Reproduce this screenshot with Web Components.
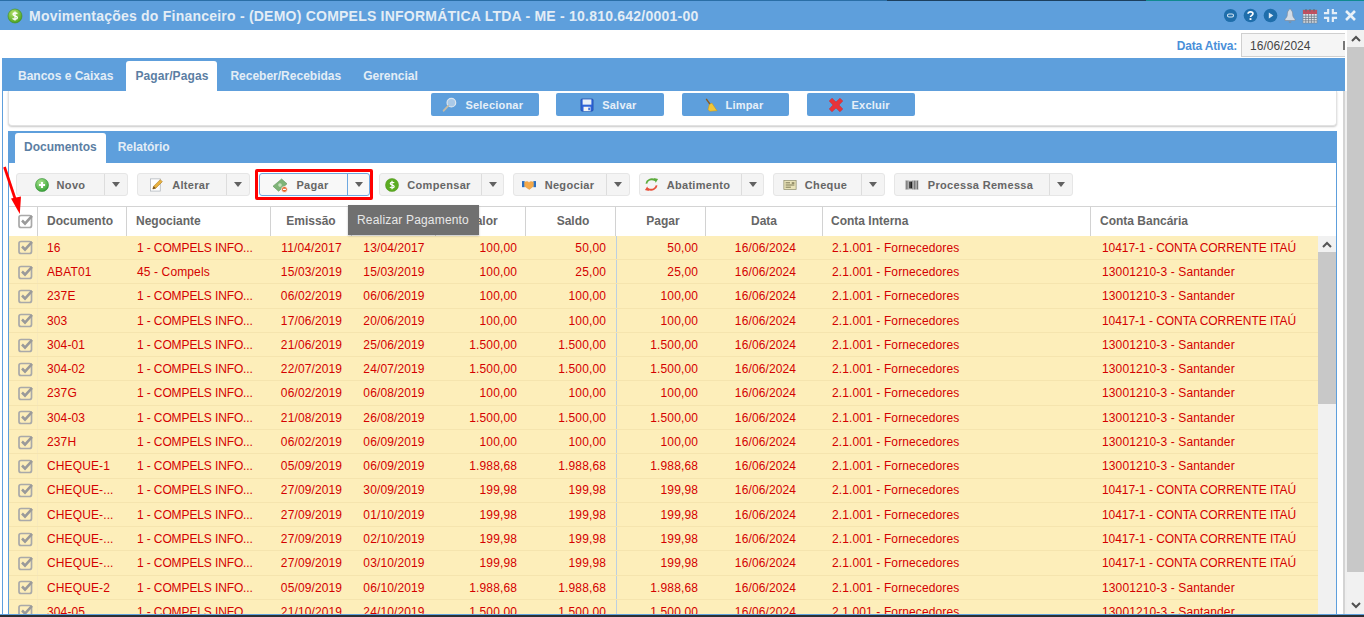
<!DOCTYPE html>
<html lang="pt-BR">
<head>
<meta charset="utf-8">
<title>Movimentações do Financeiro</title>
<style>
html,body{margin:0;padding:0;background:#fff;overflow:hidden;font-family:"Liberation Sans",Arial,sans-serif;font-size:12px}
</style>
</head>
<body>
<x-app>
  <x-titlebar slot="title" text="Movimentações do Financeiro - (DEMO) COMPELS INFORMÁTICA LTDA - ME - 10.810.642/0001-00"></x-titlebar>
  <x-date-row slot="date" label="Data Ativa:" value="16/06/2024"></x-date-row>
  <x-main-tabs slot="tabs">
    <x-tab>Bancos e Caixas</x-tab>
    <x-tab active>Pagar/Pagas</x-tab>
    <x-tab>Receber/Recebidas</x-tab>
    <x-tab>Gerencial</x-tab>
  </x-main-tabs>
  <x-action-card slot="card">
    <x-action-btn icon="search" w="108">Selecionar</x-action-btn>
    <x-action-btn icon="save" w="108">Salvar</x-action-btn>
    <x-action-btn icon="broom" w="107">Limpar</x-action-btn>
    <x-action-btn icon="redx" w="108">Excluir</x-action-btn>
  </x-action-card>
  <x-doc-panel slot="panel">
    <x-tab slot="tabs" active small>Documentos</x-tab>
    <x-tab slot="tabs" small>Relatório</x-tab>
    <x-split-btn slot="tools" icon="plus" w="112" cw="22" pr="1">Novo</x-split-btn>
    <x-split-btn slot="tools" icon="pencil" w="113" cw="22" pr="5">Alterar</x-split-btn>
    <x-split-btn slot="tools" icon="money" w="111" cw="21" pr="6" focus>Pagar</x-split-btn>
    <x-split-btn slot="tools" icon="coin" w="125" cw="21" pr="5">Compensar</x-split-btn>
    <x-split-btn slot="tools" icon="hands" w="117" cw="22" pr="5">Negociar</x-split-btn>
    <x-split-btn slot="tools" icon="sync" w="125" cw="21" pr="7">Abatimento</x-split-btn>
    <x-split-btn slot="tools" icon="cheque" w="112" cw="22" pr="5">Cheque</x-split-btn>
    <x-split-btn slot="tools" icon="barcode" w="179" cw="22" pr="7">Processa Remessa</x-split-btn>
    <x-data-grid slot="grid"></x-data-grid>
  </x-doc-panel>
  <x-scrollbar slot="scroll"></x-scrollbar>
  <x-annotations slot="over"></x-annotations>
  <x-tooltip slot="over">Realizar Pagamento</x-tooltip>
</x-app>

<script>
const ICONS = {
  dollar:`<svg viewBox="0 0 16 16" width="16" height="16"><defs><radialGradient id="g1" cx=".4" cy=".3" r=".8"><stop offset="0" stop-color="#b6e26a"/><stop offset="1" stop-color="#3d9a16"/></radialGradient></defs><circle cx="8" cy="8" r="7" fill="url(#g1)" stroke="#3f8f1c" stroke-width=".6"/><path d="M10.4 5.6C9.8 4.7 6 4.3 6 6.2c0 2 4.4 1.4 4.4 3.6 0 2-4 1.6-4.8.5M8 3.4v9.2" fill="none" stroke="#fff" stroke-width="1.3"/></svg>`,
  minus:`<svg viewBox="0 0 16 16" width="15" height="15"><circle cx="8" cy="8" r="7" fill="#1f6eab"/><rect x="4.8" y="6.4" width="6.4" height="3.2" rx="1.6" fill="none" stroke="#d9e8f4" stroke-width="1.1"/></svg>`,
  help:`<svg viewBox="0 0 16 16" width="15" height="15"><circle cx="8" cy="8" r="7.3" fill="#1f6eab"/><path d="M5.4 6.1C5.6 3.6 10.6 3.6 10.6 6.1 10.6 7.9 8 7.8 8 9.7" fill="none" stroke="#fff" stroke-width="1.8"/><rect x="7" y="10.8" width="2" height="2" fill="#fff"/></svg>`,
  play:`<svg viewBox="0 0 16 16" width="15" height="15"><circle cx="8" cy="8" r="7.3" fill="#1f6eab"/><path d="M6.2 4.8 11 8l-4.800 3.200z" fill="#dce9f4"/></svg>`,
  bell:`<svg viewBox="0 0 16 16" width="16" height="16"><path d="M8 1c1 0 1.200.8 1.300 1.400 1.200.7 1.300 2.400 1.400 4.300.1 2 1.300 3.500 2.300 4.400v1.400H3v-1.400c1-.9 2.200-2.400 2.300-4.400.1-1.900.2-3.600 1.400-4.300C6.800 1.800 7 1 8 1z" fill="#d3dce6" stroke="#7f8d9c" stroke-width=".7"/><path d="M6.200 13.400h3.600L8 15.300z" fill="#7f8d9c"/></svg>`,
  calendar:`<svg viewBox="0 0 16 16" width="16" height="16"><rect x="1" y="2" width="14" height="13" fill="#dfe4ea" stroke="#7b8794" stroke-width=".6"/><rect x="1" y="2" width="14" height="4" fill="#c0505f"/><path d="M4 1v2.500M8 1v2.500M12 1v2.500" stroke="#5d6670" stroke-width="1"/><path d="M1 8.200h14M1 10.500h14M1 12.800h14M3.800 6v9M6.600 6v9M9.400 6v9M12.200 6v9" stroke="#6f7c8a" stroke-width=".8"/></svg>`,
  compress:`<svg viewBox="0 0 16 16" width="15" height="15"><path d="M5.500 1v4.500H1M10.500 1v4.500H15M5.500 15v-4.500H1M10.500 15v-4.500H15" fill="none" stroke="#e4eef7" stroke-width="2.300"/></svg>`,
  close:`<svg viewBox="0 0 16 16" width="13" height="13"><path d="M2.500 2.500l11 11M13.500 2.500l-11 11" stroke="#e9f1f8" stroke-width="3.200"/></svg>`,
  search:`<svg viewBox="0 0 16 16" width="15" height="15"><circle cx="10" cy="6" r="4.600" fill="#a9c9e8" stroke="#dbe5ee" stroke-width="1.300"/><path d="M6.600 9.400 1.800 14.600" stroke="#c4bca8" stroke-width="2" stroke-linecap="round"/></svg>`,
  save:`<svg viewBox="0 0 16 16" width="14" height="14"><rect x="1" y="1" width="14" height="14" rx="1.500" fill="#2d63d8" stroke="#1b3f98" stroke-width=".6"/><rect x="3" y="1.600" width="10" height="6" fill="#e6eef8"/><rect x="4" y="10" width="8" height="5" fill="#f4f4f4"/><rect x="9.500" y="11" width="1.800" height="3" fill="#2d63d8"/></svg>`,
  broom:`<svg viewBox="0 0 16 16" width="14" height="14"><path d="M2.500 1 7.500 8" stroke="#8a5a22" stroke-width="1.600"/><path d="M6 7.500 9 5.800 13.500 12.500 15 14.500 6.500 15.200 4.600 13z" fill="#f2c636" stroke="#c8981a" stroke-width=".6"/></svg>`,
  redx:`<svg viewBox="0 0 16 16" width="16" height="16"><path d="M1.200 4 4 1.200 8 5l4-3.800L14.800 4 11 8l3.800 4-2.800 2.800L8 11l-4 3.800L1.200 12 5 8z" fill="#e8333a" stroke="#c92a30" stroke-width=".5"/></svg>`,
  plus:`<svg viewBox="0 0 16 16" width="14" height="14"><defs><radialGradient id="g2" cx=".4" cy=".3" r=".8"><stop offset="0" stop-color="#a8e48c"/><stop offset="1" stop-color="#2b9a2e"/></radialGradient></defs><circle cx="8" cy="8" r="7.500" fill="url(#g2)" stroke="#2e8a30" stroke-width=".6"/><path d="M8 4.500v7M4.500 8h7" stroke="#fff" stroke-width="2.400"/></svg>`,
  pencil:`<svg viewBox="0 0 16 16" width="15" height="15"><rect x="1.500" y="2" width="10.500" height="13" fill="#fff" stroke="#aeb4ba" stroke-width=".8"/><path d="M4 12.800 5 9.800 12 2.800 14.200 5 7.200 12z" fill="#e9b23f" stroke="#a8761c" stroke-width=".6"/><path d="M4 12.800 5 9.800 7.200 12z" fill="#6b4b20"/></svg>`,
  money:`<svg viewBox="0 0 16 16" width="16" height="16"><path d="M1 9.200 9.600 2l5.400 4.800-8.400 7.400z" fill="#7fb478" stroke="#5f935a" stroke-width=".6"/><circle cx="8" cy="8.100" r="1.800" fill="#c6e0bc"/><circle cx="12.400" cy="12.400" r="2.900" fill="#e8662c" stroke="#fff" stroke-width=".7"/><rect x="10.900" y="11.800" width="3" height="1.200" fill="#fff"/></svg>`,
  coin:`<svg viewBox="0 0 16 16" width="14" height="14"><circle cx="8" cy="8" r="7.500" fill="#5cac22" stroke="#4a9118" stroke-width=".5"/><path d="M10.500 5.700C9.800 4.700 6 4.300 6 6.200c0 2 4.500 1.400 4.500 3.600 0 2-4.100 1.700-4.900.5M8 3.200v9.600" fill="none" stroke="#fff" stroke-width="1.400"/></svg>`,
  hands:`<svg viewBox="0 0 16 16" width="16" height="14"><rect x="0" y="3.500" width="3" height="7" fill="#2c6fc0"/><rect x="13" y="3.500" width="3" height="7" fill="#2c6fc0"/><path d="M3 4.500 6 4 8 5l2-1 3 .5v5L8.500 13 6.500 12 3 9.500z" fill="#f4a94a" stroke="#d98a2a" stroke-width=".4"/></svg>`,
  sync:`<svg viewBox="0 0 16 16" width="15" height="15"><path d="M2.500 7C3 3.600 7.500 .8 12 3.500" fill="none" stroke="#5cab3c" stroke-width="1.900"/><path d="M10.500 1 15 2.200 12.500 6z" fill="#5cab3c"/><path d="M13.500 9C13 12.400 8.500 15.200 4 12.500" fill="none" stroke="#e8503a" stroke-width="1.900"/><path d="M5.500 15 1 13.800 3.500 10z" fill="#e8503a"/></svg>`,
  cheque:`<svg viewBox="0 0 16 16" width="14" height="14"><rect x="1" y="3" width="14" height="10" fill="#e8e2b8" stroke="#8c8a68" stroke-width=".8"/><path d="M3 5.500h5M3 8h10M3 10.500h6" stroke="#6e6a48" stroke-width="1"/><rect x="10" y="5" width="3" height="1.500" fill="#6e6a48"/></svg>`,
  barcode:`<svg viewBox="0 0 16 16" width="16" height="14"><rect x="0" y="2.500" width="16" height="11" fill="#d8d8d8"/><path d="M1.500 3v10M3.300 3v10M9 3v10M10.800 3v10M12.500 3v10M14.300 3v10" stroke="#555" stroke-width=".9"/><path d="M5.600 4v8M7.300 4v8" stroke="#222" stroke-width="1.500"/></svg>`,
  check:`<svg viewBox="0 0 16 16" width="16" height="16"><rect x="1" y="2.500" width="12.500" height="12" rx="2" fill="none" stroke="#a9a9a9" stroke-width="1.700"/><path d="M4 7.500 7 10.500 14 2.800" fill="none" stroke="#9a9a9a" stroke-width="2.600"/></svg>`
};

function comp(name, css, html, init){
  customElements.define(name, class extends HTMLElement{
    constructor(){ super(); this.attachShadow({mode:'open'}); }
    connectedCallback(){
      if(this._done) return; this._done = true;
      const h = typeof html === 'function' ? html(this) : html;
      this.shadowRoot.innerHTML = `<style>${css}</style>${h}`;
      if(init) init(this);
    }
  });
}

comp('x-icon', `:host{display:inline-flex;align-items:center;justify-content:center;flex:none}svg{display:block}`, el => ICONS[el.getAttribute('name')] || '');

comp('x-app', `
  :host{display:flex;flex-direction:column;width:1364px;height:617px;overflow:hidden;position:relative;background:#fff}
  .body{flex:1;min-height:0;display:flex}
  .main{width:1347px;display:flex;flex-direction:column;min-height:0}
  .region{flex:1;min-height:0;display:flex;margin-left:2px;border-left:1px solid #5e9fdc;overflow:hidden}
  .col{width:1329px;margin-left:5px;display:flex;flex-direction:column;min-height:0}
  .thin{margin-left:6px;width:4px;display:flex}
  .thin i{display:block;width:2px;background:#d4d4d4}
  .thin b{display:block;width:2px;background:#efefef}
  .foot{height:1px;background:#5e9fdc;flex:none}
  .foot2{height:2px;background:#2c2f33;flex:none}
`,`
  <slot name="title"></slot>
  <div class="body">
    <div class="main">
      <slot name="date"></slot>
      <slot name="tabs"></slot>
      <div class="region">
        <div class="col"><slot name="card"></slot><slot name="panel"></slot></div>
        <div class="thin"><i></i><b></b></div>
      </div>
    </div>
    <slot name="scroll"></slot>
  </div>
  <div class="foot"></div><div class="foot2"></div>
  <slot name="over"></slot>
`);

comp('x-titlebar', `
  :host{display:flex;flex-direction:column;height:30px;flex:none;background:#5e9fdc}
  .strip{height:1px;background:linear-gradient(90deg,#2a6ea6 0,#2a6ea6 65%,#1c3f5e 65%,#1c3f5e 84%,#108a90 84%,#108a90 100%);flex:none}
  .row{flex:1;display:flex;align-items:center;padding:0 4px 0 7px}
  .t{margin-left:6px;font:bold 14px "Liberation Sans",Arial,sans-serif;color:#e3edf6;white-space:nowrap;flex:1;letter-spacing:.225px}
  .ic{display:flex}
  .ic x-icon{width:20px;height:20px}
`, el => `
  <div class="strip"></div>
  <div class="row">
    <x-icon name="dollar"></x-icon>
    <div class="t">${el.getAttribute('text')}</div>
    <div class="ic">
      <x-icon name="minus"></x-icon><x-icon name="help"></x-icon><x-icon name="play"></x-icon>
      <x-icon name="bell"></x-icon><x-icon name="calendar"></x-icon><x-icon name="compress"></x-icon><x-icon name="close"></x-icon>
    </div>
  </div>`);

comp('x-date-row', `
  :host{display:flex;height:28px;flex:none;align-items:flex-start;justify-content:flex-end;padding-right:2px;overflow:hidden}
  .l{font:bold 12px "Liberation Sans",Arial,sans-serif;color:#4a90d9;margin:9px 4px 0 0;letter-spacing:-.19px}
  .v{box-sizing:border-box;width:104px;height:24px;margin-top:3px;background:#f5f5f5;border:1px solid #cfcfcf;border-right:0;padding:0 0 0 8px;font:12px/24px "Liberation Sans",Arial,sans-serif;color:#444;letter-spacing:.05px;position:relative;display:flex;justify-content:space-between}
  .c{width:2px;height:9px;background:#777;margin-top:7px}
`, el => `<div class="l">${el.getAttribute('label')}</div><div class="v"><span>${el.getAttribute('value')}</span><span class="c"></span></div>`);

comp('x-main-tabs', `
  :host{display:flex;height:33px;flex:none;background:#5e9fdc;margin:0 2px;padding:3px 0 0 7px;box-sizing:border-box;gap:4px}
`, `<slot></slot>`);

comp('x-tab', `
  :host{display:block;box-sizing:border-box;padding:0 9px;height:30px;font:bold 12px/30px "Liberation Sans",Arial,sans-serif;color:#e3edf6;border-radius:3px 3px 0 0;white-space:nowrap}
  :host([active]){background:#fff;color:#5b7ea3;letter-spacing:.09px}
  :host([small]){line-height:28px;letter-spacing:0}
`, `<slot></slot>`);

comp('x-action-card', `
  :host{display:flex;justify-content:center;flex:none;box-sizing:border-box;height:35px;padding:2px 0 0 .4px;gap:17.600px;background:#fff;border:1px solid #e2e2e2;border-top:0;border-radius:0 0 4px 4px;box-shadow:0 1px 2px rgba(0,0,0,.22)}
`, `<slot></slot>`);

comp('x-action-btn', `
  :host{display:flex;align-items:center;justify-content:center;box-sizing:border-box;height:23px;padding-right:4px;background:#5e9fdc;border-radius:2px;color:#e8f0f8;font:bold 11px "Liberation Sans",Arial,sans-serif;gap:8px;letter-spacing:.2px}
`, el => { el.style.width = el.getAttribute('w')+'px'; return `<x-icon name="${el.getAttribute('icon')}"></x-icon><slot></slot>`; });

comp('x-doc-panel', `
  :host{display:flex;flex-direction:column;flex:1;min-height:0;margin-top:5px;border:1px solid #5e9fdc;border-bottom:0;background:#fff}
  .tabs{display:flex;height:31px;flex:none;background:#5e9fdc;padding:1px 0 0 6px;box-sizing:border-box;gap:3px}
  .tools{display:flex;height:44px;flex:none;padding:10px 0 0 7px;box-sizing:border-box;gap:9px;border-bottom:1px solid #d4d4d4}
  .grid{flex:1;min-height:0;display:flex}
`, `
  <div class="tabs"><slot name="tabs"></slot></div>
  <div class="tools"><slot name="tools"></slot></div>
  <div class="grid"><slot name="grid"></slot></div>`);

comp('x-split-btn', `
  :host{display:flex;box-sizing:border-box;height:23px;background:#f4f4f4;border:1px solid #e6e6e6;border-radius:3px;color:#666;font:bold 11px "Liberation Sans",Arial,sans-serif;letter-spacing:.32px}
  :host([focus]){background:#f8f8f8;border-color:#6ea8e0}
  .m{flex:1;display:flex;align-items:center;justify-content:center;gap:8px;min-width:0}
  .c{flex:none;border-left:1px solid #ddd;display:flex;align-items:center;justify-content:center}
  :host([focus]) .c{border-left-color:#6ea8e0}
  .c i{display:block;width:0;height:0;border:4.500px solid transparent;border-top:5px solid #616161;border-bottom:0}
`, el => { el.style.width = el.getAttribute('w')+'px';
  return `<div class="m" style="padding-right:${el.getAttribute('pr')}px"><x-icon name="${el.getAttribute('icon')}"></x-icon><slot></slot></div><div class="c" style="width:${el.getAttribute('cw')}px"><i></i></div>`; });

const RED = '1 - COMPELS INFO...';
const ITAU = '10417-1 - CONTA CORRENTE ITAÚ', SAN = '13001210-3 - Santander';
const ROWS = [
 ['16',RED,'11/04/2017','13/04/2017','100,00','50,00','50,00',ITAU],
 ['ABAT01','45 - Compels','15/03/2019','15/03/2019','100,00','25,00','25,00',SAN],
 ['237E',RED,'06/02/2019','06/06/2019','100,00','100,00','100,00',SAN],
 ['303',RED,'17/06/2019','20/06/2019','100,00','100,00','100,00',ITAU],
 ['304-01',RED,'21/06/2019','25/06/2019','1.500,00','1.500,00','1.500,00',SAN],
 ['304-02',RED,'22/07/2019','24/07/2019','1.500,00','1.500,00','1.500,00',SAN],
 ['237G',RED,'06/02/2019','06/08/2019','100,00','100,00','100,00',SAN],
 ['304-03',RED,'21/08/2019','26/08/2019','1.500,00','1.500,00','1.500,00',SAN],
 ['237H',RED,'06/02/2019','06/09/2019','100,00','100,00','100,00',SAN],
 ['CHEQUE-1',RED,'05/09/2019','06/09/2019','1.988,68','1.988,68','1.988,68',SAN],
 ['CHEQUE-...',RED,'27/09/2019','30/09/2019','199,98','199,98','199,98',ITAU],
 ['CHEQUE-...',RED,'27/09/2019','01/10/2019','199,98','199,98','199,98',ITAU],
 ['CHEQUE-...',RED,'27/09/2019','02/10/2019','199,98','199,98','199,98',ITAU],
 ['CHEQUE-...',RED,'27/09/2019','03/10/2019','199,98','199,98','199,98',ITAU],
 ['CHEQUE-2',RED,'05/09/2019','06/10/2019','1.988,68','1.988,68','1.988,68',SAN],
 ['304-05',RED,'21/10/2019','24/10/2019','1.500,00','1.500,00','1.500,00',SAN]
];
const COLS = '29px 89px 144px 81px 84px 90px 90px 90px 117px 268px';
const capCls = t => (t === RED || t === ITAU) ? ' cap' : '';

comp('x-data-grid', `
  :host{display:flex;flex-direction:column;flex:1;min-width:0;min-height:0;overflow:hidden;font:12px "Liberation Sans",Arial,sans-serif}
  .r{display:grid;grid-template-columns:${COLS} 1fr}
  .h{height:29px;flex:none}
  .h>div{border-right:1px solid #d2d2d2;box-sizing:border-box;display:flex;align-items:center;padding:0 9px 1px;font-weight:bold;color:#666;white-space:nowrap;overflow:hidden}
  .h>div:last-child{border-right:0}
  .h .c{justify-content:center}
  .h .s{padding-left:13px;padding-right:8px}
  .h .ci{padding-left:8px}
  .b{flex:1;min-height:0;display:flex;overflow:hidden}
  .rows{width:1309px;flex:none;background:#fdeeba}
  .rows>.d:first-child{margin-top:-.15px}
  .d{height:24.270px;box-sizing:border-box;border-bottom:1px solid #f5e4ae;color:#d40000;letter-spacing:.12px}
  .d>div{display:flex;align-items:center;box-sizing:border-box;padding:.66px 9px 0;white-space:nowrap;overflow:hidden}
  .d .x{padding:0 0 0 6px;justify-content:center;border-right:1px solid #f7e9bd}
  .d .c{justify-content:center}
  .d .dt{padding-left:11px}
  .d .n{justify-content:flex-end;padding:.66px 9px 0 0}
  .d .sd{padding-right:10px}
  .d .p{border-left:1px solid #bccfe2;padding-right:8px}
  .d .neg{padding-left:10px}
  .d .bk{padding-left:11px}
  .d .cap{letter-spacing:-.05px}
  .d .neg.cap{letter-spacing:-.12px}
  .h .x{padding:0 0 1px 6px;justify-content:center}
  .sb{width:18px;flex:none;background:#f1f1f1;display:flex;flex-direction:column}
  .up{height:16px;display:flex;align-items:center;justify-content:center}
  .th{height:152px;background:#c8c8c8}
`, () => `
  <div class="r h">
    <div class="x"><x-icon name="check"></x-icon></div>
    <div>Documento</div><div>Negociante</div><div class="c">Emissão</div><div class="c"></div>
    <div class="c s">Valor</div><div class="c s">Saldo</div><div class="c s">Pagar</div><div class="c">Data</div><div class="ci">Conta Interna</div><div>Conta Bancária</div>
  </div>
  <div class="b">
    <div class="rows">${ROWS.map(r=>`
      <div class="r d">
        <div class="x"><x-icon name="check"></x-icon></div>
        <div>${r[0]}</div><div class="neg${capCls(r[1])}">${r[1]}</div><div class="c">${r[2]}</div><div class="c">${r[3]}</div>
        <div class="n">${r[4]}</div><div class="n sd">${r[5]}</div><div class="n p">${r[6]}</div>
        <div class="c dt">16/06/2024</div><div>2.1.001 - Fornecedores</div><div class="bk${capCls(r[7])}">${r[7]}</div>
      </div>`).join('')}
    </div>
    <div class="sb"><div class="up"><svg width="10" height="7" viewBox="0 0 10 7"><path d="M1 6 5 2l4 4" fill="none" stroke="#555" stroke-width="2"/></svg></div><div class="th"></div></div>
  </div>`);

comp('x-scrollbar', `
  :host{display:flex;flex-direction:column;width:17px;flex:none;background:#f1f1f1}
  .up,.down{height:17px;flex:none;display:flex;align-items:center;justify-content:center}
  .th{height:525px;background:#c8c8c8;flex:none}
  .sp{flex:1}
`, `<div class="up"><svg width="10" height="7" viewBox="0 0 10 7"><path d="M1 6 5 2l4 4" fill="none" stroke="#505050" stroke-width="2"/></svg></div><div class="th"></div><div class="sp"></div><div class="down"><svg width="10" height="7" viewBox="0 0 10 7"><path d="M1 1l4 4 4-4" fill="none" stroke="#505050" stroke-width="2"/></svg></div>`);

comp('x-annotations', `
  :host{position:absolute;left:0;top:0;width:1364px;height:617px;pointer-events:none}
  .box{position:absolute;left:255px;top:169px;width:118px;height:31px;box-sizing:border-box;border:3px solid #f00;border-radius:2px}
  svg{position:absolute;left:0;top:160px}
`, `<div class="box"></div>
  <svg width="30" height="60" viewBox="0 0 30 60"><path d="M4.500 7 15.500 40" stroke="#f00" stroke-width="2.700"/><path d="M11 38.500 21 36.500 19.800 54z" fill="#f00"/></svg>`);

comp('x-tooltip', `
  :host{position:absolute;left:348px;top:205px;width:131px;height:30px;box-sizing:border-box;background:#707070;color:#e8e8e8;font:12px/31px "Liberation Sans",Arial,sans-serif;padding-left:9px;letter-spacing:.18px;white-space:nowrap;box-shadow:0 1px 2px rgba(0,0,0,.25)}
`, `<slot></slot>`);
</script>
</body>
</html>
